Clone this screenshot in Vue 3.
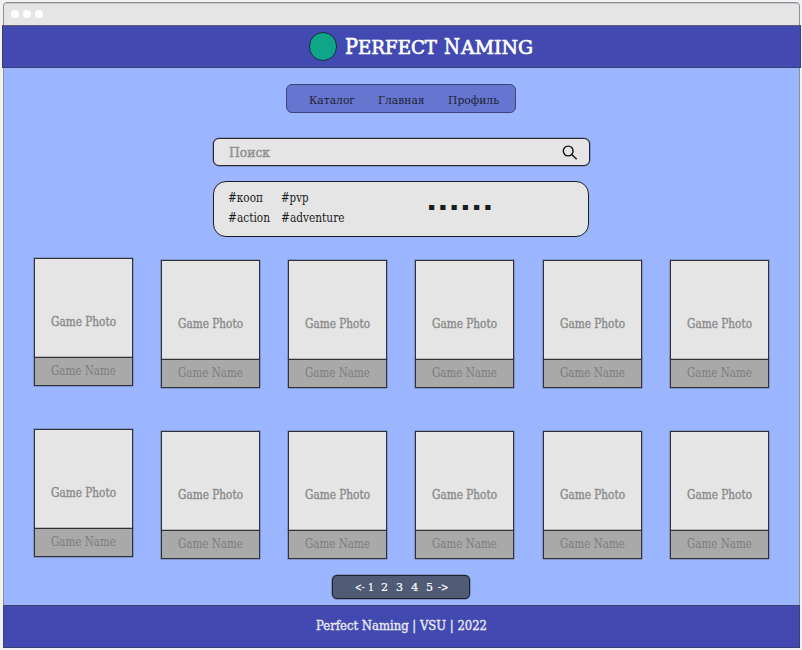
<script setup>
import { h } from 'vue'

// Text label fitted to a fixed width, baseline 15px below its top edge
const Label = (props) =>
  h('svg', { width: props.w, height: 20, overflow: 'visible' }, [
    h('text', { x: 0, y: 15, fill: 'currentColor', textLength: props.w, lengthAdjust: 'spacingAndGlyphs' }, props.text),
  ])
Label.props = ['text', 'w']

const nav = [
  { text: 'Каталог', w: 46 },
  { text: 'Главная', w: 46.5 },
  { text: 'Профиль', w: 51 },
]
const tags = [
  { text: '#кооп', w: 35 },
  { text: '#pvp', w: 27.5 },
  { text: '#action', w: 42 },
  { text: '#adventure', w: 63.5 },
]
const pages = [
  { text: '<-', w: 9.5 },
  { text: '1', w: 6 },
  { text: '2', w: 7 },
  { text: '3', w: 7 },
  { text: '4', w: 7.5 },
  { text: '5', w: 7 },
  { text: '->', w: 10.5 },
]
</script>

<template>
  <div class="screen">
    <div class="window">
      <div class="titlebar"><i /><i /><i /></div>
      <header class="header">
        <span class="logo" />
        <h1 class="brand">
          <Label class="big" text="P" :w="13" />
          <Label class="small" text="ERFECT" :w="79" />
          <Label class="big second" text="N" :w="16" />
          <Label class="small" text="AMING" :w="72" />
        </h1>
      </header>
      <main class="main">
        <nav class="nav">
          <a v-for="n in nav" :key="n.text"><Label v-bind="n" /></a>
        </nav>
        <div class="search">
          <Label text="Поиск" :w="41" />
          <svg class="glass" width="16" height="16" viewBox="0 0 16 16">
            <circle cx="6.2" cy="6" r="4.9" />
            <path d="M9.7 9.5L14.7 14.3" />
          </svg>
        </div>
        <div class="tags">
          <div class="taglist"><Label v-for="t in tags" :key="t.text" v-bind="t" /></div>
          <Label class="more" text="......" :w="67.5" />
        </div>
        <section class="games">
          <article v-for="i in 12" :key="i" class="card" :class="{ first: i % 6 === 1 }">
            <div class="photo"><Label text="Game Photo" :w="65" /></div>
            <div class="name"><Label text="Game Name" :w="65" /></div>
          </article>
        </section>
        <div class="pager">
          <Label v-for="p in pages" :key="p.text" v-bind="p" />
        </div>
      </main>
      <footer class="footer"><Label text="Perfect Naming | VSU | 2022" :w="171" /></footer>
    </div>
  </div>
</template>

<style>
body { background: #f2f2f2; }
</style>

<style scoped>
* { box-sizing: border-box; }
svg { display: block; flex: none; }
.screen {
  width: 802px;
  height: 650px;
  padding: 2px 2px 2px 3px;
  background: #f2f2f2;
  overflow: hidden;
  font-family: "DejaVu Serif", serif;
}
.window {
  width: 797px;
  height: 646px;
  display: flex;
  flex-direction: column;
  border: 1px solid #8c8f98;
  border-radius: 4px 4px 0 0;
  background: #9bb6ff;
}
.titlebar {
  height: 22px;
  flex: none;
  display: flex;
  gap: 4px;
  padding: 6px 0 0 7px;
  background: #e5e5e5;
  border-top: 1px solid #c4c4c4;
  border-radius: 3px 3px 0 0;
}
.titlebar i { width: 8px; height: 8px; border-radius: 50%; background: #fff; }
.header {
  height: 43px;
  flex: none;
  display: flex;
  margin: 0 -2px;
  padding: 6px 0 0 305.5px;
  background: #424ab1;
  border: 1px solid #3b4074;
  border-top-color: #5d606f;
}
.logo {
  width: 28.5px;
  height: 28.5px;
  border: 1.5px solid #192c38;
  border-radius: 50%;
  background: #0fa589;
}
.brand {
  display: flex;
  margin: 7px 0 0 7.5px;
  color: #fff;
  font-weight: 400;
  stroke: #fff;
  stroke-width: .65px;
}
.big { font-size: 22px; }
.small { font-size: 18px; }
.second { margin: 0 1px 0 7.5px; }
.main {
  flex: 1;
  display: flex;
  flex-direction: column;
  align-items: center;
  padding-right: 1px;
}
.nav {
  width: 230px;
  height: 29px;
  display: flex;
  gap: 23.3px;
  margin: 16px 0 0;
  padding: 3.5px 0 0 21.7px;
  border: 1px solid #3c4577;
  border-radius: 6px;
  background: #6676d0;
  color: #20222e;
  font-size: 10.5px;
}
.search {
  width: 377px;
  height: 28px;
  display: flex;
  justify-content: space-between;
  margin-top: 25px;
  padding: 2.5px 11px 0 15px;
  border: 1px solid #25272c;
  border-radius: 6px;
  background: #e5e5e5;
  box-shadow: 0 0 0 .5px #25272c80;
  color: #929292;
  font-size: 13px;
  stroke: #929292;
  stroke-width: .5px;
}
.glass { margin-top: 3px; fill: none; stroke: #111; stroke-width: 1.4; }
.tags {
  width: 376px;
  height: 56px;
  align-self: flex-start;
  display: flex;
  margin: 15px 0 0 208.6px;
  padding: 5px 0 0 14px;
  border: 1px solid #1b1c20;
  border-radius: 13px;
  background: #e5e5e5;
  color: #1c1c1c;
}
.taglist {
  width: 198px;
  display: grid;
  grid-template-columns: 53px 64px;
  grid-auto-rows: 20px;
  font-size: 12.5px;
}
.more {
  margin-top: 8px;
  font-family: "DejaVu Sans", sans-serif;
  font-weight: 700;
  font-size: 26px;
}
.games {
  align-self: stretch;
  display: grid;
  grid-template-columns: repeat(6, 99px);
  column-gap: 28.3px;
  row-gap: 43px;
  margin: 23px 0 0 29.5px;
}
.card { height: 128px; }
.card.first { margin-top: -2px; }
.photo, .name {
  display: flex;
  justify-content: center;
  border: 1px solid #303238;
  box-shadow: 0 0 0 .5px #30323880;
}
.photo {
  height: 99px;
  padding-top: 52px;
  border-bottom: 0;
  background: #e5e5e5;
  color: #8b8b8b;
  font-size: 12.3px;
  stroke: #8b8b8b;
  stroke-width: .4px;
}
.name {
  height: 29px;
  padding-top: 2px;
  background: #a9a9a9;
  color: #7d7d7d;
  font-size: 12.3px;
}
.pager {
  width: 138px;
  height: 24px;
  display: flex;
  gap: 0 7.7px;
  margin-top: 16px;
  padding: 0 0 0 22px;
  border: 1px solid #1e2128;
  border-radius: 5px;
  background: #505b76;
  box-shadow: 0 0 0 .5px #1e212880;
  color: #fff;
  font-size: 11.7px;
  stroke: #fff;
  stroke-width: .2px;
}
.pager svg:first-child { margin-right: -4.7px; }
.pager svg:last-child { margin-left: -2px; }
.footer {
  height: 43px;
  flex: none;
  display: flex;
  justify-content: center;
  margin: 0 -1px -1px;
  padding-top: 9px;
  border: 1px solid #3b4074;
  background: #424ab1;
  color: #e8e8f2;
  font-size: 13px;
  stroke: #e8e8f2;
  stroke-width: .4px;
}
</style>
